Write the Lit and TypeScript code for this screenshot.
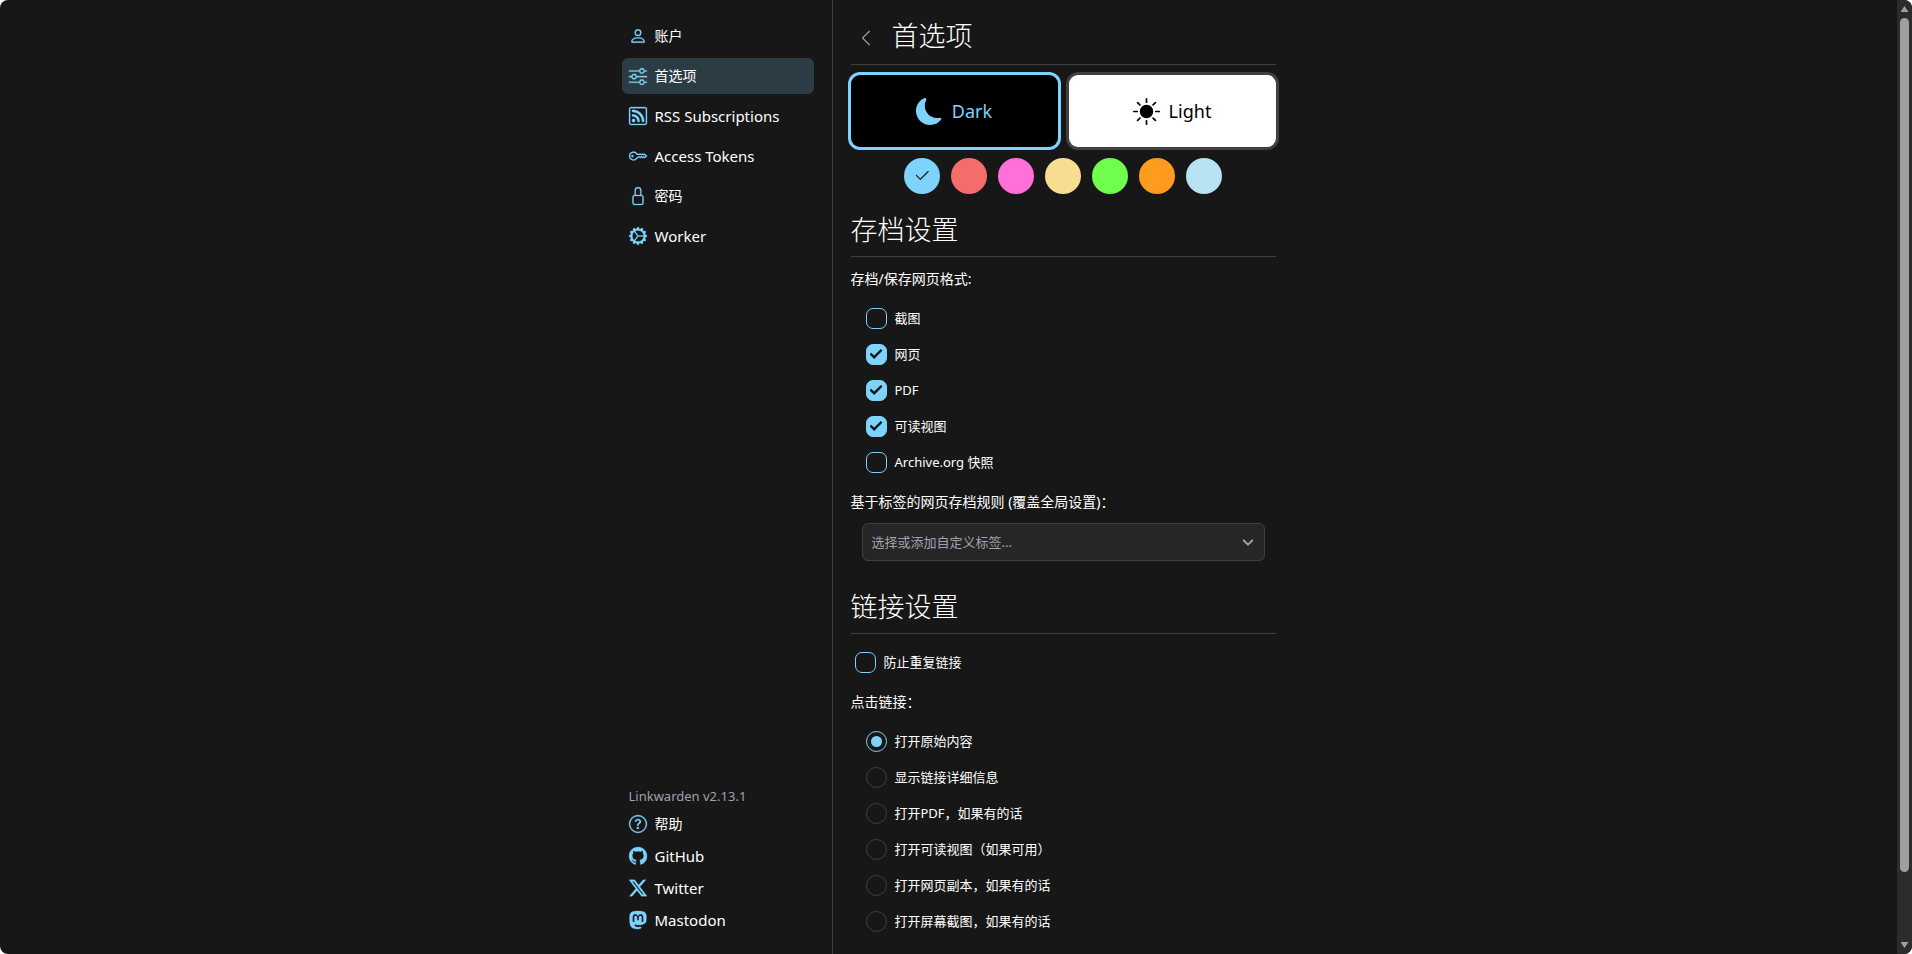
import { LitElement, html, css, svg } from "lit";
import { customElement, property, state } from "lit/decorators.js";
import { classMap } from "lit/directives/class-map.js";
import { styleMap } from "lit/directives/style-map.js";

const ICONS: Record<string, string[]> = {
  person: [
    "M8 8a3 3 0 1 0 0-6 3 3 0 0 0 0 6m2-3a2 2 0 1 1-4 0 2 2 0 0 1 4 0m4 8c0 1-1 1-1 1H3s-1 0-1-1 1-4 6-4 6 3 6 4m-1-.004c-.001-.246-.154-.986-.832-1.664C11.516 10.68 10.289 10 8 10s-3.516.68-4.168 1.332c-.678.678-.83 1.418-.832 1.664z",
  ],
  sliders: [
    "M11.5 2a1.5 1.5 0 1 0 0 3 1.5 1.5 0 0 0 0-3M9.05 3a2.5 2.5 0 0 1 4.9 0H16v1h-2.05a2.5 2.5 0 0 1-4.9 0H0V3zM4.5 7a1.5 1.5 0 1 0 0 3 1.5 1.5 0 0 0 0-3M2.05 8a2.5 2.5 0 0 1 4.9 0H16v1H6.95a2.5 2.5 0 0 1-4.9 0H0V8zm9.45 4a1.5 1.5 0 1 0 0 3 1.5 1.5 0 0 0 0-3m-2.45 1a2.5 2.5 0 0 1 4.9 0H16v1h-2.05a2.5 2.5 0 0 1-4.9 0H0v-1z",
  ],
  rss: [
    "M14 1a1 1 0 0 1 1 1v12a1 1 0 0 1-1 1H2a1 1 0 0 1-1-1V2a1 1 0 0 1 1-1zM2 0a2 2 0 0 0-2 2v12a2 2 0 0 0 2 2h12a2 2 0 0 0 2-2V2a2 2 0 0 0-2-2z",
    "M5.5 12a1.5 1.5 0 1 1-3 0 1.5 1.5 0 0 1 3 0m-3-8.5a1 1 0 0 1 1-1c5.523 0 10 4.477 10 10a1 1 0 1 1-2 0 8 8 0 0 0-8-8 1 1 0 0 1-1-1m0 4a1 1 0 0 1 1-1 6 6 0 0 1 6 6 1 1 0 1 1-2 0 4 4 0 0 0-4-4 1 1 0 0 1-1-1",
  ],
  key: [
    "M0 8a4 4 0 0 1 7.465-2H14a.5.5 0 0 1 .354.146l1.5 1.5a.5.5 0 0 1 0 .708l-1.5 1.5a.5.5 0 0 1-.708 0L13 9.207l-.646.647a.5.5 0 0 1-.708 0L11 9.207l-.646.647a.5.5 0 0 1-.708 0L9 9.207l-.646.647A.5.5 0 0 1 8 10h-.535A4 4 0 0 1 0 8m4-3a3 3 0 1 0 2.712 4.285A.5.5 0 0 1 7.163 9h.63l.853-.854a.5.5 0 0 1 .708 0l.646.647.646-.647a.5.5 0 0 1 .708 0l.646.647.646-.647a.5.5 0 0 1 .708 0l.646.647.793-.793-1-1h-6.63a.5.5 0 0 1-.451-.285A3 3 0 0 0 4 5",
    "M4 8a1 1 0 1 1-2 0 1 1 0 0 1 2 0",
  ],
  lock: [
    "M8 1a2 2 0 0 1 2 2v4H6V3a2 2 0 0 1 2-2m3 6V3a3 3 0 0 0-6 0v4a2 2 0 0 0-2 2v5a2 2 0 0 0 2 2h6a2 2 0 0 0 2-2V9a2 2 0 0 0-2-2M5 8h6a1 1 0 0 1 1 1v5a1 1 0 0 1-1 1H5a1 1 0 0 1-1-1V9a1 1 0 0 1 1-1",
  ],
  gear: [
    "M7.068.727c.243-.97 1.62-.97 1.864 0l.071.286a.96.96 0 0 0 1.622.434l.205-.211c.695-.719 1.888-.03 1.613.931l-.08.284a.96.96 0 0 0 1.187 1.187l.283-.081c.96-.275 1.65.918.931 1.613l-.211.205a.96.96 0 0 0 .434 1.622l.286.071c.97.243.97 1.62 0 1.864l-.286.071a.96.96 0 0 0-.434 1.622l.211.205c.719.695.03 1.888-.931 1.613l-.284-.08a.96.96 0 0 0-1.187 1.187l.081.283c.275.96-.918 1.65-1.613.931l-.205-.211a.96.96 0 0 0-1.622.434l-.071.286c-.243.97-1.62.97-1.864 0l-.071-.286a.96.96 0 0 0-1.622-.434l-.205.211c-.695.719-1.888.03-1.613-.931l.08-.284a.96.96 0 0 0-1.186-1.187l-.284.081c-.96.275-1.65-.918-.931-1.613l.211-.205a.96.96 0 0 0-.434-1.622l-.286-.071c-.97-.243-.97-1.62 0-1.864l.286-.071a.96.96 0 0 0 .434-1.622l-.211-.205c-.719-.695-.03-1.888.931-1.613l.284.08a.96.96 0 0 0 1.187-1.186l-.081-.284c-.275-.96.918-1.65 1.613-.931l.205.211a.96.96 0 0 0 1.622-.434zM12.973 8.5H8.25l-2.834 3.779A4.998 4.998 0 0 0 12.973 8.5m0-1a4.998 4.998 0 0 0-7.557-3.779l2.834 3.78zM5.048 3.967l-.087.065zm-.431.355A4.98 4.98 0 0 0 3.002 8c0 1.455.622 2.765 1.615 3.678L7.375 8zm.344 7.646.087.065z",
  ],
  help: [
    "M8 15A7 7 0 1 1 8 1a7 7 0 0 1 0 14m0 1A8 8 0 1 0 8 0a8 8 0 0 0 0 16",
    "M5.255 5.786a.237.237 0 0 0 .241.247h.825c.138 0 .248-.113.266-.25.09-.656.54-1.134 1.342-1.134.686 0 1.314.343 1.314 1.168 0 .635-.374.927-.965 1.371-.673.489-1.206 1.06-1.168 1.987l.003.217a.25.25 0 0 0 .25.246h.811a.25.25 0 0 0 .25-.25v-.105c0-.718.273-.927 1.01-1.486.609-.463 1.244-.977 1.244-2.056 0-1.511-1.276-2.241-2.673-2.241-1.267 0-2.655.59-2.75 2.286m1.557 5.763c0 .533.425.927 1.01.927.609 0 1.028-.394 1.028-.927 0-.552-.42-.94-1.029-.94-.584 0-1.009.388-1.009.94",
  ],
  github: [
    "M8 0C3.58 0 0 3.58 0 8c0 3.54 2.29 6.53 5.47 7.59.4.07.55-.17.55-.38 0-.19-.01-.82-.01-1.49-2.01.37-2.53-.49-2.69-.94-.09-.23-.48-.94-.82-1.13-.28-.15-.68-.52-.01-.53.63-.01 1.08.58 1.23.82.72 1.21 1.87.87 2.33.66.07-.52.28-.87.51-1.07-1.78-.2-3.64-.89-3.64-3.95 0-.87.31-1.59.82-2.15-.08-.2-.36-1.02.08-2.12 0 0 .67-.21 2.2.82.64-.18 1.32-.27 2-.27s1.36.09 2 .27c1.53-1.04 2.2-.82 2.2-.82.44 1.1.16 1.92.08 2.12.51.56.82 1.27.82 2.15 0 3.07-1.87 3.75-3.65 3.95.29.25.54.73.54 1.48 0 1.07-.01 1.93-.01 2.2 0 .21.15.46.55.38A8.01 8.01 0 0 0 16 8c0-4.42-3.58-8-8-8",
  ],
  twitter: [
    "M12.6.75h2.454l-5.36 6.142L16 15.25h-4.937l-3.867-5.07-4.425 5.07H.316l5.733-6.57L0 .75h5.063l3.495 4.633L12.601.75Zm-.86 13.028h1.36L4.323 2.145H2.865z",
  ],
  mastodon: [
    "M11.19 12.195c2.016-.24 3.77-1.475 3.99-2.603.348-1.778.32-4.339.32-4.339 0-3.47-2.286-4.488-2.286-4.488C12.062.238 10.083.017 8.027 0h-.05C5.92.017 3.942.238 2.79.765c0 0-2.285 1.017-2.285 4.488l-.002.662c-.004.64-.007 1.35.011 2.091.083 3.394.626 6.74 3.78 7.57 1.454.383 2.703.463 3.709.408 1.823-.1 2.847-.647 2.847-.647l-.06-1.317s-1.303.41-2.767.36c-1.45-.05-2.98-.156-3.215-1.928a4 4 0 0 1-.033-.496s1.424.346 3.228.428c1.103.05 2.137-.064 3.188-.189zm1.613-2.47H11.13v-4.08c0-.859-.364-1.295-1.091-1.295-.804 0-1.207.517-1.207 1.541v2.233H7.168V5.89c0-1.024-.403-1.541-1.207-1.541-.727 0-1.091.436-1.091 1.296v4.079H3.197V5.522q0-1.288.66-2.046c.456-.505 1.052-.764 1.793-.764.856 0 1.504.328 1.933.983L8 4.39l.417-.695c.429-.655 1.077-.983 1.934-.983.74 0 1.336.259 1.791.764q.662.757.661 2.046z",
  ],
  moon: [
    "M6 .278a.77.77 0 0 1 .08.858 7.2 7.2 0 0 0-.878 3.46c0 4.021 3.278 7.277 7.318 7.277q.792-.001 1.533-.16a.79.79 0 0 1 .81.316.73.73 0 0 1-.031.893A8.35 8.35 0 0 1 8.344 16C3.734 16 0 12.286 0 7.71 0 4.266 2.114 1.312 5.124.06A.75.75 0 0 1 6 .278",
  ],
  sun: [
    "M8 12a4 4 0 1 0 0-8 4 4 0 0 0 0 8M8 0a.5.5 0 0 1 .5.5v2a.5.5 0 0 1-1 0v-2A.5.5 0 0 1 8 0m0 13a.5.5 0 0 1 .5.5v2a.5.5 0 0 1-1 0v-2A.5.5 0 0 1 8 13m8-5a.5.5 0 0 1-.5.5h-2a.5.5 0 0 1 0-1h2a.5.5 0 0 1 .5.5M3 8a.5.5 0 0 1-.5.5h-2a.5.5 0 0 1 0-1h2A.5.5 0 0 1 3 8m10.657-5.657a.5.5 0 0 1 0 .707l-1.414 1.415a.5.5 0 1 1-.707-.708l1.414-1.414a.5.5 0 0 1 .707 0m-9.193 9.193a.5.5 0 0 1 0 .707L3.05 13.657a.5.5 0 0 1-.707-.707l1.414-1.414a.5.5 0 0 1 .707 0m9.193 2.121a.5.5 0 0 1-.707 0l-1.414-1.414a.5.5 0 0 1 .707-.707l1.414 1.414a.5.5 0 0 1 0 .707M4.464 4.465a.5.5 0 0 1-.707 0L2.343 3.05a.5.5 0 1 1 .707-.707l1.414 1.414a.5.5 0 0 1 0 .708",
  ],
  back: [
    "M11.354 1.646a.5.5 0 0 1 0 .708L5.707 8l5.647 5.646a.5.5 0 0 1-.708.708l-6-6a.5.5 0 0 1 0-.708l6-6a.5.5 0 0 1 .708 0",
  ],
  check: [
    "M13.854 3.646a.5.5 0 0 1 0 .708l-7 7a.5.5 0 0 1-.708 0l-3.5-3.5a.5.5 0 1 1 .708-.708L6.5 10.293l6.646-6.647a.5.5 0 0 1 .708 0",
  ],
};

@customElement("lw-icon")
export class LwIcon extends LitElement {
  @property() name = "";

  static styles = css`
    :host {
      display: inline-flex;
      flex: none;
      width: 18px;
      height: 18px;
    }
    .glyph {
      width: 100%;
      height: 100%;
      fill: currentColor;
      stroke: currentColor;
      stroke-width: var(--icon-stroke, 0);
      overflow: visible;
    }
  `;

  render() {
    return html`<svg class="glyph" viewBox="0 0 16 16" aria-hidden="true">
      ${(ICONS[this.name] ?? []).map((d) => svg`<path d=${d}></path>`)}
    </svg>`;
  }
}

const NAV = [
  { icon: "person", label: "账户" },
  { icon: "sliders", label: "首选项", active: true },
  { icon: "rss", label: "RSS Subscriptions", latin: true },
  { icon: "key", label: "Access Tokens", latin: true },
  { icon: "lock", label: "密码" },
  { icon: "gear", label: "Worker", latin: true },
];

const LINKS = [
  { icon: "help", label: "帮助" },
  { icon: "github", label: "GitHub", latin: true },
  { icon: "twitter", label: "Twitter", latin: true },
  { icon: "mastodon", label: "Mastodon", latin: true },
];

@customElement("settings-sidebar")
export class SettingsSidebar extends LitElement {
  static styles = css`
    :host {
      display: flex;
      flex-direction: column;
      justify-content: space-between;
      box-sizing: border-box;
      padding: 18px;
      border-right: 1px solid #404040;
    }
    .nav {
      display: flex;
      flex-direction: column;
      gap: 4px;
    }
    .links {
      display: flex;
      flex-direction: column;
    }
    .item {
      display: flex;
      align-items: center;
      gap: 8px;
      height: 36px;
      padding: 0 7px;
      border-radius: 6px;
      color: #fff;
      text-decoration: none;
      white-space: nowrap;
    }
    .item.compact {
      height: 32px;
    }
    .item.latin {
      font-size: 15px;
    }
    .item:hover {
      background: rgba(125, 211, 252, 0.1);
    }
    .item.active {
      background: rgba(125, 211, 252, 0.2);
    }
    lw-icon {
      color: #7dd3fc;
      --icon-stroke: 0.25;
    }
    .version {
      margin: 0;
      padding: 0 7px;
      font-size: 13px;
      line-height: 24px;
      color: #9ca3af;
    }
  `;

  render() {
    return html`
      <nav class="nav">
        ${NAV.map(
          (n) => html`<a
            href="#"
            class=${classMap({ item: true, active: !!n.active, latin: !!n.latin })}
            ><lw-icon name=${n.icon}></lw-icon><span>${n.label}</span></a
          >`
        )}
      </nav>
      <div class="links">
        <p class="version">Linkwarden v2.13.1</p>
        ${LINKS.map(
          (n) => html`<a
            href="#"
            class=${classMap({ item: true, compact: true, latin: !!n.latin })}
            ><lw-icon name=${n.icon}></lw-icon><span>${n.label}</span></a
          >`
        )}
      </div>
    `;
  }
}

const COLORS = [
  "#7dd3fc",
  "#f56c6c",
  "#ff70d9",
  "#f8dc90",
  "#6fff4c",
  "#ff9c20",
  "#b6e2f1",
];

const FORMATS = [
  { label: "截图", on: false },
  { label: "网页", on: true },
  { label: "PDF", on: true },
  { label: "可读视图", on: true },
  { label: "Archive.org 快照", on: false },
];

const CLICK_ACTIONS = [
  "打开原始内容",
  "显示链接详细信息",
  "打开PDF，如果有的话",
  "打开可读视图（如果可用）",
  "打开网页副本，如果有的话",
  "打开屏幕截图，如果有的话",
];

@customElement("preference-panel")
export class PreferencePanel extends LitElement {
  @state() private theme = "dark";
  @state() private color = 0;

  static styles = css`
    :host {
      display: block;
      box-sizing: border-box;
      padding: 18px 18px 13px;
    }
    .title-row {
      display: flex;
      align-items: center;
      gap: 10px;
      height: 36px;
    }
    .back {
      display: grid;
      place-items: center;
      width: 31px;
      height: 31px;
      padding: 3px 0 0;
      border: 0;
      background: none;
      color: #9ca3af;
    }
    h1,
    h2 {
      margin: 0;
      font-size: 27px;
      font-weight: 300;
      line-height: 32px;
    }
    .rule {
      height: 1px;
      margin: 10px 0;
      border: 0;
      background: #404040;
    }
    .themes {
      display: grid;
      grid-template-columns: 1fr 1fr;
      gap: 11px;
    }
    .theme {
      display: flex;
      align-items: center;
      justify-content: center;
      gap: 9px;
      height: 72px;
      padding: 0;
      border: 0;
      border-radius: 9px;
      box-shadow: 0 0 0 3px #404040;
      font: inherit;
      font-size: 18px;
    }
    .theme lw-icon {
      width: 27px;
      height: 27px;
    }
    .theme.dark {
      background: #000;
      color: #7dd3fc;
    }
    .theme.light {
      background: #fff;
      color: #000;
    }
    .theme.selected {
      box-shadow: 0 0 0 3px #7dd3fc;
    }
    .swatches {
      display: flex;
      justify-content: center;
      gap: 11px;
      margin-top: 11px;
    }
    .swatch {
      display: grid;
      place-items: center;
      width: 36px;
      height: 36px;
      padding: 0;
      border: 0;
      border-radius: 50%;
      color: #171717;
    }
    .section {
      margin-top: 20px;
    }
    .section.spaced {
      margin-top: 30px;
    }
    .caption {
      display: block;
      margin: 12px 0 11px;
      line-height: 20px;
    }
    .group {
      margin: 0;
      padding: 0;
      border: 0;
    }
    .group > legend {
      padding: 2px 0 11px;
      line-height: 20px;
    }
    .options {
      padding: 0 15px;
    }
    .single {
      padding: 0 4px;
    }
    .option {
      display: flex;
      align-items: center;
      gap: 8px;
      width: fit-content;
      height: 36px;
      font-size: 13px;
    }
    .box {
      appearance: none;
      display: grid;
      place-items: center;
      box-sizing: border-box;
      width: 21px;
      height: 21px;
      margin: 0;
      border: 1px solid #7dd3fc;
      border-radius: 7px;
    }
    .box:checked {
      background: #7dd3fc;
    }
    .box:checked::before {
      content: "";
      width: 13px;
      height: 10px;
      background: #10171b;
      clip-path: polygon(0 54%, 13% 37%, 36% 65%, 87% 0, 100% 15%, 36% 100%);
    }
    .dot {
      appearance: none;
      display: grid;
      place-items: center;
      box-sizing: border-box;
      width: 21px;
      height: 21px;
      margin: 0;
      border: 1px solid #404040;
      border-radius: 50%;
    }
    .dot:checked {
      border-color: #7dd3fc;
    }
    .dot:checked::before {
      content: "";
      width: 11px;
      height: 11px;
      border-radius: 50%;
      background: #7dd3fc;
    }
    .picker {
      display: grid;
      align-items: center;
      margin: 0 11px;
    }
    .tags {
      appearance: none;
      grid-area: 1 / 1;
      width: 100%;
      height: 38px;
      padding: 0 36px 0 9px;
      border: 1px solid #404040;
      border-radius: 6px;
      background: #262626;
      color: #9ca3af;
      font: inherit;
      font-size: 13px;
    }
    .arrow {
      grid-area: 1 / 1;
      justify-self: end;
      width: 18px;
      height: 18px;
      margin-right: 8px;
      fill: #9ca3af;
      pointer-events: none;
    }
  `;

  private themeButton(id: string, icon: string, label: string) {
    return html`<button
      class=${classMap({
        theme: true,
        [id]: true,
        selected: this.theme === id,
      })}
      @click=${() => (this.theme = id)}
    >
      <lw-icon name=${icon}></lw-icon><span>${label}</span>
    </button>`;
  }

  render() {
    return html`
      <div class="title-row">
        <button class="back" aria-label="返回">
          <lw-icon name="back"></lw-icon>
        </button>
        <h1>首选项</h1>
      </div>
      <hr class="rule" />
      <div class="themes">
        ${this.themeButton("dark", "moon", "Dark")}
        ${this.themeButton("light", "sun", "Light")}
      </div>
      <div class="swatches">
        ${COLORS.map(
          (c, i) => html`<button
            class="swatch"
            aria-label=${c}
            style=${styleMap({ backgroundColor: c })}
            @click=${() => (this.color = i)}
          >
            ${i === this.color ? html`<lw-icon name="check"></lw-icon>` : ""}
          </button>`
        )}
      </div>

      <section class="section">
        <h2>存档设置</h2>
        <hr class="rule" />
        <fieldset class="group">
          <legend>存档/保存网页格式:</legend>
          <div class="options">
            ${FORMATS.map(
              (f) => html`<label class="option"
                ><input class="box" type="checkbox" ?checked=${f.on} /><span
                  >${f.label}</span
                ></label
              >`
            )}
          </div>
        </fieldset>
        <label class="caption" for="tags"
          >基于标签的网页存档规则 (覆盖全局设置)：</label
        >
        <div class="picker">
          <select class="tags" id="tags">
            <option>选择或添加自定义标签...</option>
          </select>
          <svg class="arrow" viewBox="0 0 20 20" aria-hidden="true">
            <path
              d="M4.516 7.548c0.436-0.446 1.043-0.481 1.576 0l3.908 3.747 3.908-3.747c0.533-0.481 1.141-0.446 1.574 0 0.436 0.445 0.408 1.197 0 1.615-0.406 0.418-4.695 4.502-4.695 4.502-0.217 0.223-0.502 0.335-0.787 0.335s-0.57-0.112-0.789-0.335c0 0-4.287-4.084-4.695-4.502s-0.436-1.17 0-1.615z"
            ></path>
          </svg>
        </div>
      </section>

      <section class="section spaced">
        <h2>链接设置</h2>
        <hr class="rule" />
        <div class="single">
          <label class="option"
            ><input class="box" type="checkbox" /><span
              >防止重复链接</span
            ></label
          >
        </div>
        <p class="caption" id="click-caption">点击链接：</p>
        <div class="options" role="radiogroup" aria-labelledby="click-caption">
          ${CLICK_ACTIONS.map(
            (a, i) => html`<label class="option"
              ><input
                class="dot"
                type="radio"
                name="click"
                ?checked=${i === 0}
              /><span>${a}</span></label
            >`
          )}
        </div>
      </section>
    `;
  }
}

@customElement("app-root")
export class AppRoot extends LitElement {
  static styles = css`
    :host {
      display: block;
      background: #fff;
      color: #fff;
      font-family: "Noto Sans", "Noto Sans CJK SC", sans-serif;
      font-size: 14px;
      line-height: 20px;
    }
    .window {
      display: flex;
      min-height: 100vh;
      border-radius: 8px;
      overflow: hidden;
      background: #171717;
    }
    .page {
      flex: 1;
      display: flex;
      justify-content: center;
    }
    .columns {
      display: grid;
      grid-template-columns: 229px minmax(0, 1fr);
      width: 100%;
      max-width: 690px;
    }
    .scrollbar {
      display: flex;
      flex-direction: column;
      align-items: center;
      gap: 6px;
      box-sizing: border-box;
      width: 15px;
      padding: 6px 0;
      background: #2c2c2c;
    }
    .arrow {
      width: 8px;
      height: 6px;
      background: #9f9f9f;
      clip-path: polygon(50% 0, 100% 100%, 0 100%);
    }
    .arrow.down {
      clip-path: polygon(0 0, 100% 0, 50% 100%);
    }
    .track {
      flex: 1;
      display: flex;
      flex-direction: column;
    }
    .thumb {
      width: 9px;
      height: 93%;
      border-radius: 5px;
      background: #9f9f9f;
    }
  `;

  render() {
    return html`
      <div class="window">
        <main class="page">
          <div class="columns">
            <settings-sidebar></settings-sidebar>
            <preference-panel></preference-panel>
          </div>
        </main>
        <div class="scrollbar" aria-hidden="true">
          <div class="arrow"></div>
          <div class="track"><div class="thumb"></div></div>
          <div class="arrow down"></div>
        </div>
      </div>
    `;
  }
}
